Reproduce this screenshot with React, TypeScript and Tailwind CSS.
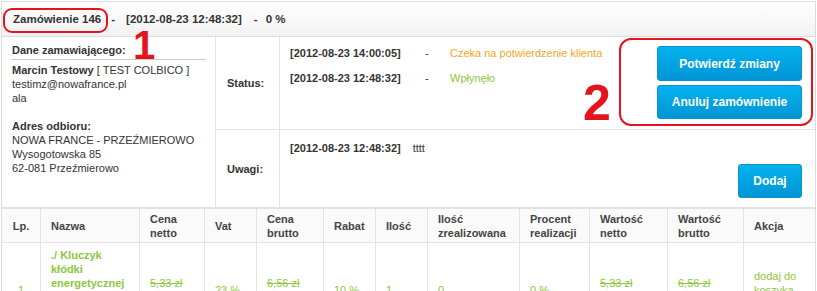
const green = "text-[#8dc63f]"

function Btn({ label, className }: { label: string; className: string }) {
    return (
        <button
            className={`flex items-center justify-center rounded-[3px] border border-[#0a93cf] bg-linear-to-b from-[#05b2ef] to-[#0095d5] text-[12px] font-bold text-white ${className}`}
        >
            {label}
        </button>
    )
}

const headers = [
    ["Lp."],
    ["Nazwa"],
    ["Cena", "netto"],
    ["Vat"],
    ["Cena", "brutto"],
    ["Rabat"],
    ["Ilość"],
    ["Ilość", "zrealizowana"],
    ["Procent", "realizacji"],
    ["Wartość", "netto"],
    ["Wartość", "brutto"],
    ["Akcja"],
]

function Price({ old, now }: { old: string; now: string }) {
    return (
        <div className={`flex flex-col ${green}`}>
            <span className="line-through">{old}</span>
            <span>{now}</span>
        </div>
    )
}

export default function App() {
    const cell = "border-r border-[#e3e3e3] pl-[10px] flex items-center"
    return (
        <div className="relative h-[291px] w-[817px] overflow-hidden bg-white pl-[1px] pt-[1px] font-['Liberation_Sans',Arial,sans-serif] text-[11px] leading-[14px] text-[#333]">
            <div className="w-[815px] border border-[#dcdcdc]">
                {/* naglowek zamowienia */}
                <div className="flex h-[35px] items-center border-b border-[#dcdcdc] bg-linear-to-b from-white to-[#f2f2f2] pl-[11px] text-[11.5px] font-bold">
                    <span>Zamówienie 146</span>
                    <span className="ml-[10px]">-</span>
                    <span className="ml-[11px]">[2012-08-23 12:48:32]</span>
                    <span className="ml-[12px]">-</span>
                    <span className="ml-[8px]">0 %</span>
                </div>

                <div className="flex h-[170px]">
                    <div className="w-[214px] border-r border-[#e3e3e3] pl-[10px] pr-[9px] pt-[6px]">
                        <div className="border-b border-[#c9c9c9] pb-[2px] font-bold">Dane zamawiającego:</div>
                        <div className="mt-[3px]">
                            <div>
                                <b>Marcin Testowy</b> [ TEST COLBICO ]
                            </div>
                            <div>testimz@nowafrance.pl</div>
                            <div>ala</div>
                            <div className="mt-[14px] font-bold">Adres odbioru:</div>
                            <div>NOWA FRANCE - PRZEŹMIEROWO</div>
                            <div>Wysogotowska 85</div>
                            <div>62-081 Przeźmierowo</div>
                        </div>
                    </div>

                    <div className="flex flex-1 flex-col">
                        <div className="flex h-[93px] border-b border-[#e3e3e3]">
                            <div className="flex w-[64px] items-center border-r border-[#e3e3e3] pl-[11px] font-bold">Status:</div>
                            <div className="flex flex-1 justify-between pl-[10px] pr-[13px] pt-[9px]">
                                <div className="grid h-fit grid-cols-[135px_25px_auto] gap-y-[11px]">
                                    <b>[2012-08-23 14:00:05]</b>
                                    <span>-</span>
                                    <span className="text-[#f6a623]">Czeka na potwierdzenie klienta</span>
                                    <b>[2012-08-23 12:48:32]</b>
                                    <span>-</span>
                                    <span className={green}>Wpłynęło</span>
                                </div>
                                <div className="flex flex-col gap-[4px]">
                                    <Btn label="Potwierdź zmiany" className="h-[35px] w-[145px]" />
                                    <Btn label="Anuluj zamównienie" className="h-[34px] w-[145px]" />
                                </div>
                            </div>
                        </div>
                        <div className="flex flex-1">
                            <div className="flex w-[64px] items-center border-r border-[#e3e3e3] pl-[11px] font-bold">Uwagi:</div>
                            <div className="flex flex-1 flex-col pl-[10px] pr-[13px] pt-[11px]">
                                <div>
                                    <b>[2012-08-23 12:48:32]</b>
                                    <span className="ml-[12px]">tttt</span>
                                </div>
                                <Btn label="Dodaj" className="mb-[9px] mt-auto h-[34px] w-[64px] self-end" />
                            </div>
                        </div>
                    </div>
                </div>

                {/* pozycje zamowienia */}
                <div className="grid grid-cols-[39px_99px_65px_52px_67px_52px_52px_92px_70px_78px_76px_71px] border-t-2 border-[#e3e3e3]">
                    {headers.map((h, i) => (
                        <div
                            key={i}
                            className={`flex h-[34px] flex-col justify-center border-b border-[#e3e3e3] bg-[#fafafa] font-bold text-[#444] ${i < 11 ? "border-r" : ""} ${i === 0 ? "items-center" : "pl-[10px]"}`}
                        >
                            {h.map((t) => (
                                <span key={t}>{t}</span>
                            ))}
                        </div>
                    ))}

                    <div className={`h-[94px] border-r border-[#e3e3e3] flex items-center justify-center ${green}`}>1</div>
                    <div className={`h-[94px] border-r border-[#e3e3e3] pl-[10px] pr-[8px] pt-[5px] font-bold ${green}`}>
                        ./ Kluczyk kłódki energetycznej z zawieszką nr 25 (zapas)
                    </div>
                    <div className={cell}>
                        <Price old="5,33 zł" now="4,80 zł" />
                    </div>
                    <div className={`${cell} ${green}`}>23 %</div>
                    <div className={cell}>
                        <Price old="6,56 zł" now="5,90 zł" />
                    </div>
                    <div className={`${cell} ${green}`}>10 %</div>
                    <div className={`${cell} ${green}`}>1</div>
                    <div className={`${cell} ${green}`}>0</div>
                    <div className={`${cell} ${green}`}>0 %</div>
                    <div className={cell}>
                        <Price old="5,33 zł" now="4,80 zł" />
                    </div>
                    <div className={cell}>
                        <Price old="6,56 zł" now="5,90 zł" />
                    </div>
                    <div className={`flex items-center pl-[10px] pr-[4px] ${green}`}>dodaj do koszyka usuń</div>
                </div>
            </div>

            {/* adnotacje */}
            <div className="absolute left-[3px] top-[8px] h-[25px] w-[105px] rounded-[9px] border-2 border-[#e5131d]" />
            <div className="absolute left-[619px] top-[38px] h-[88px] w-[194px] rounded-[12px] border-2 border-[#e5131d]" />
            <div className="absolute left-[133px] top-[25px] text-[40px] font-bold leading-none text-[#e5131d]">1</div>
            <div className="absolute left-[583px] top-[78px] text-[50px] font-bold leading-none text-[#e5131d]">2</div>
        </div>
    )
}
